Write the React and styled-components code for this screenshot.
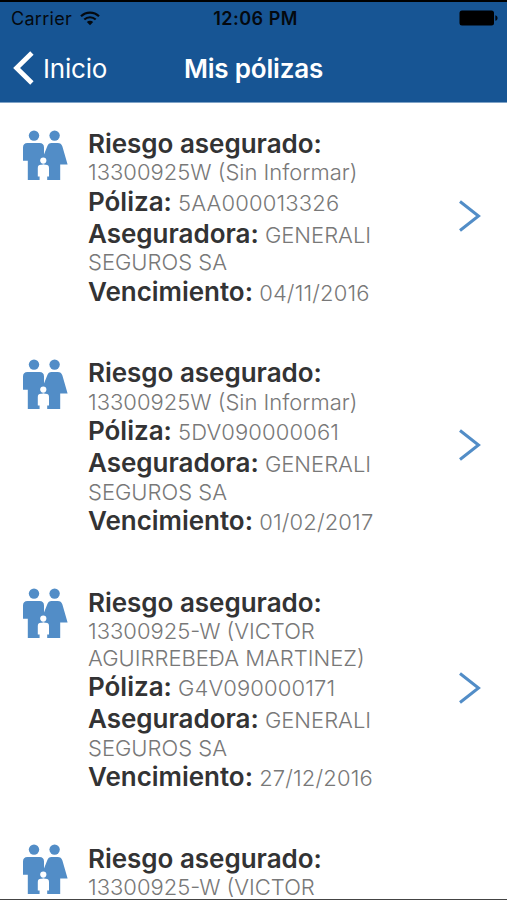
import React from "react";
import styled, { createGlobalStyle } from "styled-components";

const COLORS = {
  navy: "#175594",
  blue: "#528dc7",
  ink: "#333334",
  gray: "#787878",
};

const POLICIES = [
  {
    risk: "13300925W (Sin Informar)",
    number: "5AA000013326",
    insurer: "GENERALI SEGUROS SA",
    expires: "04/11/2016",
  },
  {
    risk: "13300925W (Sin Informar)",
    number: "5DV090000061",
    insurer: "GENERALI SEGUROS SA",
    expires: "01/02/2017",
  },
  {
    risk: "13300925-W (VICTOR AGUIRREBEÐA MARTINEZ)",
    number: "G4V090000171",
    insurer: "GENERALI SEGUROS SA",
    expires: "27/12/2016",
  },
  {
    risk: "13300925-W (VICTOR",
  },
];

const WifiIcon = () => (
  <svg width="20" height="15" viewBox="0 0 20 15" fill="none" stroke="#04090f">
    <path d="M1 5.2C6 .3 14 .3 19 5.2" strokeWidth="2.2" />
    <path d="M4.3 8.5c3.3-3 8.1-3 11.4 0" strokeWidth="2.2" />
    <path d="M6.8 11c1.9-1.7 4.5-1.7 6.4 0L10 14.3z" fill="#04090f" stroke="none" />
  </svg>
);

const BatteryIcon = () => (
  <svg width="39" height="16" viewBox="0 0 39 16">
    <rect x="0.5" y="0.5" width="34.5" height="15" rx="2.5" fill="#000" />
    <path d="M36.3 5.2c3 .6 3 5 0 5.6z" fill="#04090f" />
  </svg>
);

const FamilyIcon = () => (
  <svg width="46" height="51" viewBox="0 0 46 51" fill={COLORS.blue}>
    <circle cx="11" cy="5.6" r="5.2" />
    <circle cx="31.6" cy="5.6" r="5.2" />
    <path d="M4.5 13H16.5q4.5 0 4.5 4.5V34l-4 2v14H4.8V30.7H0V17.5Q0 13 4.5 13z" />
    <path d="M28.4 13h6.4q3.4 0 4.6 3.4l5.2 18h-7.4V50H24V36l-4-2v-7l4.4-11q1-3 4-3z" />
    <g fill="#fff">
      <circle cx="20.3" cy="30.6" r="3.1" />
      <path d="M18 34.8h4.8q3.2 0 3.2 3.2v8.4h-1.8V51h-7.6v-4.6h-1.8V38q0-3.2 3.2-3.2z" />
    </g>
  </svg>
);

const App = () => {
  return (
    <Screen>
      <GlobalStyle />
      <Header>
        <StatusBar>
          <Carrier>
            Carrier <WifiIcon />
          </Carrier>
          <Clock>12:06 PM</Clock>
          <Battery>
            <BatteryIcon />
          </Battery>
        </StatusBar>
        <NavBar>
          <BackButton>
            <svg width="21" height="34" viewBox="0 0 21 34" fill="none">
              <path d="M18.9 2L3.6 17l15.3 15" stroke="#fff" strokeWidth="4.8" />
            </svg>
            Inicio
          </BackButton>
          <Title>Mis pólizas</Title>
        </NavBar>
      </Header>
      <List>
        {POLICIES.map((policy, index) => (
          <Item key={index}>
            <IconWrapper>
              <FamilyIcon />
            </IconWrapper>
            <Details>
              <Field>
                <Label>Riesgo asegurado:</Label>
                <br />
                {policy.risk}
              </Field>
              {policy.number && (
                <>
                  <Field>
                    <Label>Póliza:</Label> <Digits>{policy.number}</Digits>
                  </Field>
                  <Field>
                    <Label>Aseguradora:</Label> {policy.insurer}
                  </Field>
                  <Field>
                    <Label>Vencimiento:</Label> <Digits>{policy.expires}</Digits>
                  </Field>
                </>
              )}
            </Details>
            {policy.number && (
              <Chevron width="22" height="32" viewBox="0 0 22 32" fill="none">
                <path d="M1 1.5L19.5 16 1 30.5" stroke={COLORS.blue} strokeWidth="3" />
              </Chevron>
            )}
          </Item>
        ))}
      </List>
    </Screen>
  );
};

const GlobalStyle = createGlobalStyle`
  *, *::before, *::after {
    box-sizing: border-box;
  }

  body {
    margin: 0;
    background-color: #fff;
    font-family: Inter, "Liberation Sans", sans-serif;
  }

  svg {
    display: block;
    flex-shrink: 0;
  }
`;

const Screen = styled.div`
  display: flex;
  flex-direction: column;
  width: 507px;
  height: 900px;
  overflow: hidden;
  background-color: #fff;
  border-bottom: 1px solid #444;
`;

const Header = styled.header`
  flex-shrink: 0;
  height: 103px;
  background-color: ${COLORS.navy};
  border-top: 2px solid #000;
  border-bottom: 1px solid #7fa3c7;
`;

const StatusBar = styled.div`
  display: grid;
  grid-template-columns: 1fr auto 1fr;
  align-items: center;
  height: 32px;
  padding: 0 9px 0 11px;
  color: #04090f;
  font-size: 18px;
`;

const Carrier = styled.div`
  display: flex;
  align-items: center;
  gap: 8px;
  letter-spacing: 0.3px;
`;

const Clock = styled.div`
  padding-left: 2px;
  font-weight: 600;
  letter-spacing: 0.5px;
`;

const Battery = styled.div`
  display: flex;
  justify-content: flex-end;
`;

const NavBar = styled.nav`
  display: grid;
  grid-template-columns: 1fr auto 1fr;
  align-items: center;
  height: 68px;
  padding: 0 13px;
  color: #fff;
`;

const BackButton = styled.button`
  display: flex;
  align-items: center;
  gap: 9px;
  padding: 0;
  border: none;
  background: none;
  color: inherit;
  font-family: inherit;
  font-size: 26px;
  letter-spacing: -0.2px;
`;

const Title = styled.h1`
  margin: 0;
  font-size: 26px;
  font-weight: 600;
  letter-spacing: -0.2px;
`;

const List = styled.ul`
  flex: 1;
  min-height: 0;
  margin: 0;
  padding: 0;
  list-style: none;
  overflow: hidden;
`;

const Item = styled.li`
  display: flex;
  align-items: center;
  padding: 24.9px 26px 24.9px 23px;
`;

const IconWrapper = styled.div`
  align-self: flex-start;
  width: 65px;
  padding-top: 1.9px;
`;

const Details = styled.div`
  width: 330px;
  color: ${COLORS.gray};
  font-size: 22px;
  font-weight: 300;
  line-height: 26.6px;
`;

const Field = styled.p`
  margin: 0;
`;

const Label = styled.strong`
  color: ${COLORS.ink};
  font-size: 26px;
  font-weight: 600;
  line-height: 31.6px;
  letter-spacing: -0.02px;
`;

const Digits = styled.span`
  letter-spacing: 0.15px;
`;

const Chevron = styled.svg`
  margin: 0 0 4px auto;
`;

export default App;
